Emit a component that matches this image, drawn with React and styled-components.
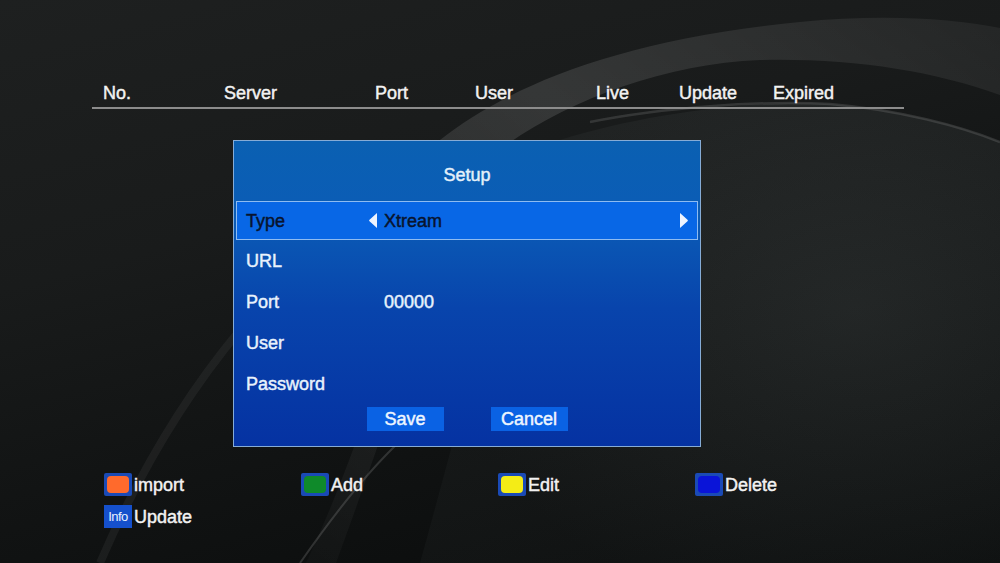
import React from 'react';
import styled, { createGlobalStyle } from 'styled-components';

const GlobalStyle = createGlobalStyle`
  html, body { margin: 0; padding: 0; background: #101212; }
  body {
    font-family: "Liberation Sans", Arial, sans-serif;
    -webkit-text-stroke-width: 0.45px;
  }
`;

const columns = [
  { label: 'No.', width: 121 },
  { label: 'Server', width: 151 },
  { label: 'Port', width: 100 },
  { label: 'User', width: 121 },
  { label: 'Live', width: 83 },
  { label: 'Update', width: 94 },
  { label: 'Expired', width: 120 },
];

const fields = [
  { label: 'URL', value: '' },
  { label: 'Port', value: '00000' },
  { label: 'User', value: '' },
  { label: 'Password', value: '' },
];

const keys = [
  { color: '#ff6a2c', label: 'import' },
  { color: '#0f8a2a', label: 'Add' },
  { color: '#f4ec16', label: 'Edit' },
  { color: '#0a14d8', label: 'Delete' },
];

// the swoosh wallpaper behind everything
function Backdrop() {
  return (
    <BackdropSvg viewBox="0 0 1000 563" preserveAspectRatio="none">
      <defs>
        <radialGradient id="lower" cx="0.75" cy="0.45" r="0.7">
          <stop offset="0" stopColor="#c8d8d8" stopOpacity="0.1" />
          <stop offset="1" stopColor="#c8d8d8" stopOpacity="0.03" />
        </radialGradient>
        <linearGradient id="band" x1="0" y1="1" x2="1" y2="0">
          <stop offset="0" stopColor="#fff" stopOpacity="0.02" />
          <stop offset="0.6" stopColor="#fff" stopOpacity="0.12" />
          <stop offset="1" stopColor="#fff" stopOpacity="0.05" />
        </linearGradient>
      </defs>
      <path
        d="M560,140 C650,112 760,100 830,104 C900,110 960,125 1000,142 L1000,563 L420,563 C460,420 500,250 560,140 Z"
        fill="url(#lower)"
      />
      <path
        d="M306,563 C350,470 400,330 440,140 C510,85 620,40 800,22 C880,14 950,18 1000,28 L1000,95 C930,70 850,58 760,60 C640,65 520,120 460,185 C420,330 370,470 336,563 Z"
        fill="url(#band)"
      />
      <path
        d="M590,122 C660,108 760,100 830,104 C900,110 960,126 1000,142"
        stroke="#fff"
        strokeOpacity="0.12"
        strokeWidth="2.5"
        fill="none"
      />
      <path
        d="M100,563 C140,470 190,390 240,330"
        stroke="#fff"
        strokeOpacity="0.05"
        strokeWidth="8"
        fill="none"
      />
      <path
        d="M300,563 C330,520 360,480 395,446"
        stroke="#fff"
        strokeOpacity="0.14"
        strokeWidth="2"
        fill="none"
      />
    </BackdropSvg>
  );
}

function ArrowLeft() {
  return (
    <svg width="10" height="17" viewBox="0 0 10 17">
      <path d="M9,1 L9,16 L1.5,9.3 Q0.6,8.5 1.5,7.7 Z" fill="#eef4ff" />
    </svg>
  );
}

function ArrowRight() {
  return (
    <svg width="10" height="17" viewBox="0 0 10 17">
      <path d="M1,1 L1,16 L8.5,9.3 Q9.4,8.5 8.5,7.7 Z" fill="#eef4ff" />
    </svg>
  );
}

export default function App() {
  return (
    <Page>
      <GlobalStyle />
      <Backdrop />
      <Content>
        <HeaderRow>
          {columns.map((c) => (
            <HeaderCell key={c.label} $width={c.width}>{c.label}</HeaderCell>
          ))}
        </HeaderRow>

        <Dialog>
          <Title>Setup</Title>
          <SelectedRow>
            <Label $dark>Type</Label>
            <ArrowSlot><ArrowLeft /></ArrowSlot>
            <Value $dark>Xtream</Value>
            <ArrowRight />
          </SelectedRow>
          {fields.map((f) => (
            <FieldRow key={f.label}>
              <Label>{f.label}</Label>
              <ArrowSlot />
              <Value>{f.value}</Value>
            </FieldRow>
          ))}
          <Buttons>
            <Button>Save</Button>
            <Button>Cancel</Button>
          </Buttons>
        </Dialog>

        <Footer>
          {keys.map((k) => (
            <KeyItem key={k.label}>
              <KeyBox><KeyColor $color={k.color} /></KeyBox>
              <KeyText>{k.label}</KeyText>
            </KeyItem>
          ))}
          <KeyItem>
            <InfoBadge>Info</InfoBadge>
            <KeyText>Update</KeyText>
          </KeyItem>
        </Footer>
      </Content>
    </Page>
  );
}

const Page = styled.div`
  position: relative;
  width: 1000px;
  height: 563px;
  overflow: hidden;
  background: linear-gradient(165deg, #1e2020 0%, #191b1b 35%, #121414 60%, #080a0a 100%);
`;

const BackdropSvg = styled.svg`
  position: absolute;
  inset: 0;
  width: 100%;
  height: 100%;
  z-index: 0;
`;

const Content = styled.div`
  position: relative;
  z-index: 1;
  display: flex;
  flex-direction: column;
`;

const HeaderRow = styled.div`
  display: flex;
  margin: 82px 0 0 92px;
  width: 812px;
  padding-left: 11px;
  box-sizing: border-box;
  height: 27px;
  border-bottom: 2px solid #8c8c8c;
`;

const HeaderCell = styled.div`
  width: ${(p) => p.$width}px;
  flex-shrink: 0;
  color: #f2f2f2;
  font-size: 18px;
  line-height: 22px;
`;

const Dialog = styled.div`
  margin: 31px 0 0 233px;
  width: 468px;
  height: 307px;
  box-sizing: border-box;
  border: 1px solid #86acd6;
  background: linear-gradient(180deg, #0a60b2 0%, #0b5cb6 25%, #0844ac 55%, #0532a2 100%);
  display: flex;
  flex-direction: column;
`;

const Title = styled.div`
  height: 60px;
  padding-top: 23px;
  box-sizing: border-box;
  text-align: center;
  color: #e4f0fa;
  font-size: 18px;
  line-height: 22px;
`;

const SelectedRow = styled.div`
  display: flex;
  align-items: center;
  margin: 0 2px;
  height: 39px;
  box-sizing: border-box;
  border: 1px solid #8ebcf2;
  background: #0867e6;
  padding: 0 8px 0 9px;
`;

const FieldRow = styled.div`
  display: flex;
  align-items: center;
  height: 41px;
  padding-left: 12px;
`;

const Label = styled.div`
  width: 122px;
  flex-shrink: 0;
  color: ${(p) => (p.$dark ? '#08142e' : '#e8f2fc')};
  font-size: 18px;
  line-height: 22px;
`;

const ArrowSlot = styled.div`
  width: 16px;
  flex-shrink: 0;
  display: flex;
  align-items: center;
`;

const Value = styled.div`
  flex: 1;
  color: ${(p) => (p.$dark ? '#08142e' : '#e8f2fc')};
  font-size: 18px;
  line-height: 22px;
`;

const Buttons = styled.div`
  display: flex;
  justify-content: center;
  gap: 47px;
  margin-top: 3px;
`;

const Button = styled.div`
  width: 77px;
  height: 24px;
  background: #0a62e4;
  color: #eef6ff;
  font-size: 18px;
  line-height: 25px;
  text-align: center;
`;

const Footer = styled.div`
  display: grid;
  grid-template-columns: repeat(4, 197px);
  row-gap: 9px;
  margin: 26px 0 0 104px;
`;

const KeyItem = styled.div`
  display: flex;
  align-items: center;
  gap: 2px;
  height: 23px;
`;

const KeyBox = styled.div`
  width: 28px;
  height: 23px;
  box-sizing: border-box;
  padding: 3px;
  background: #1a4ab6;
  border-radius: 2px;
  display: flex;
`;

const KeyColor = styled.div`
  flex: 1;
  border-radius: 4px;
  background: ${(p) => p.$color};
`;

const InfoBadge = styled.div`
  width: 28px;
  height: 23px;
  background: #1550cc;
  color: #eaf2ff;
  font-size: 13px;
  line-height: 23px;
  text-align: center;
  letter-spacing: -0.5px;
  -webkit-text-stroke-width: 0;
`;

const KeyText = styled.div`
  color: #f2f2f2;
  font-size: 18px;
  line-height: 22px;
`;
